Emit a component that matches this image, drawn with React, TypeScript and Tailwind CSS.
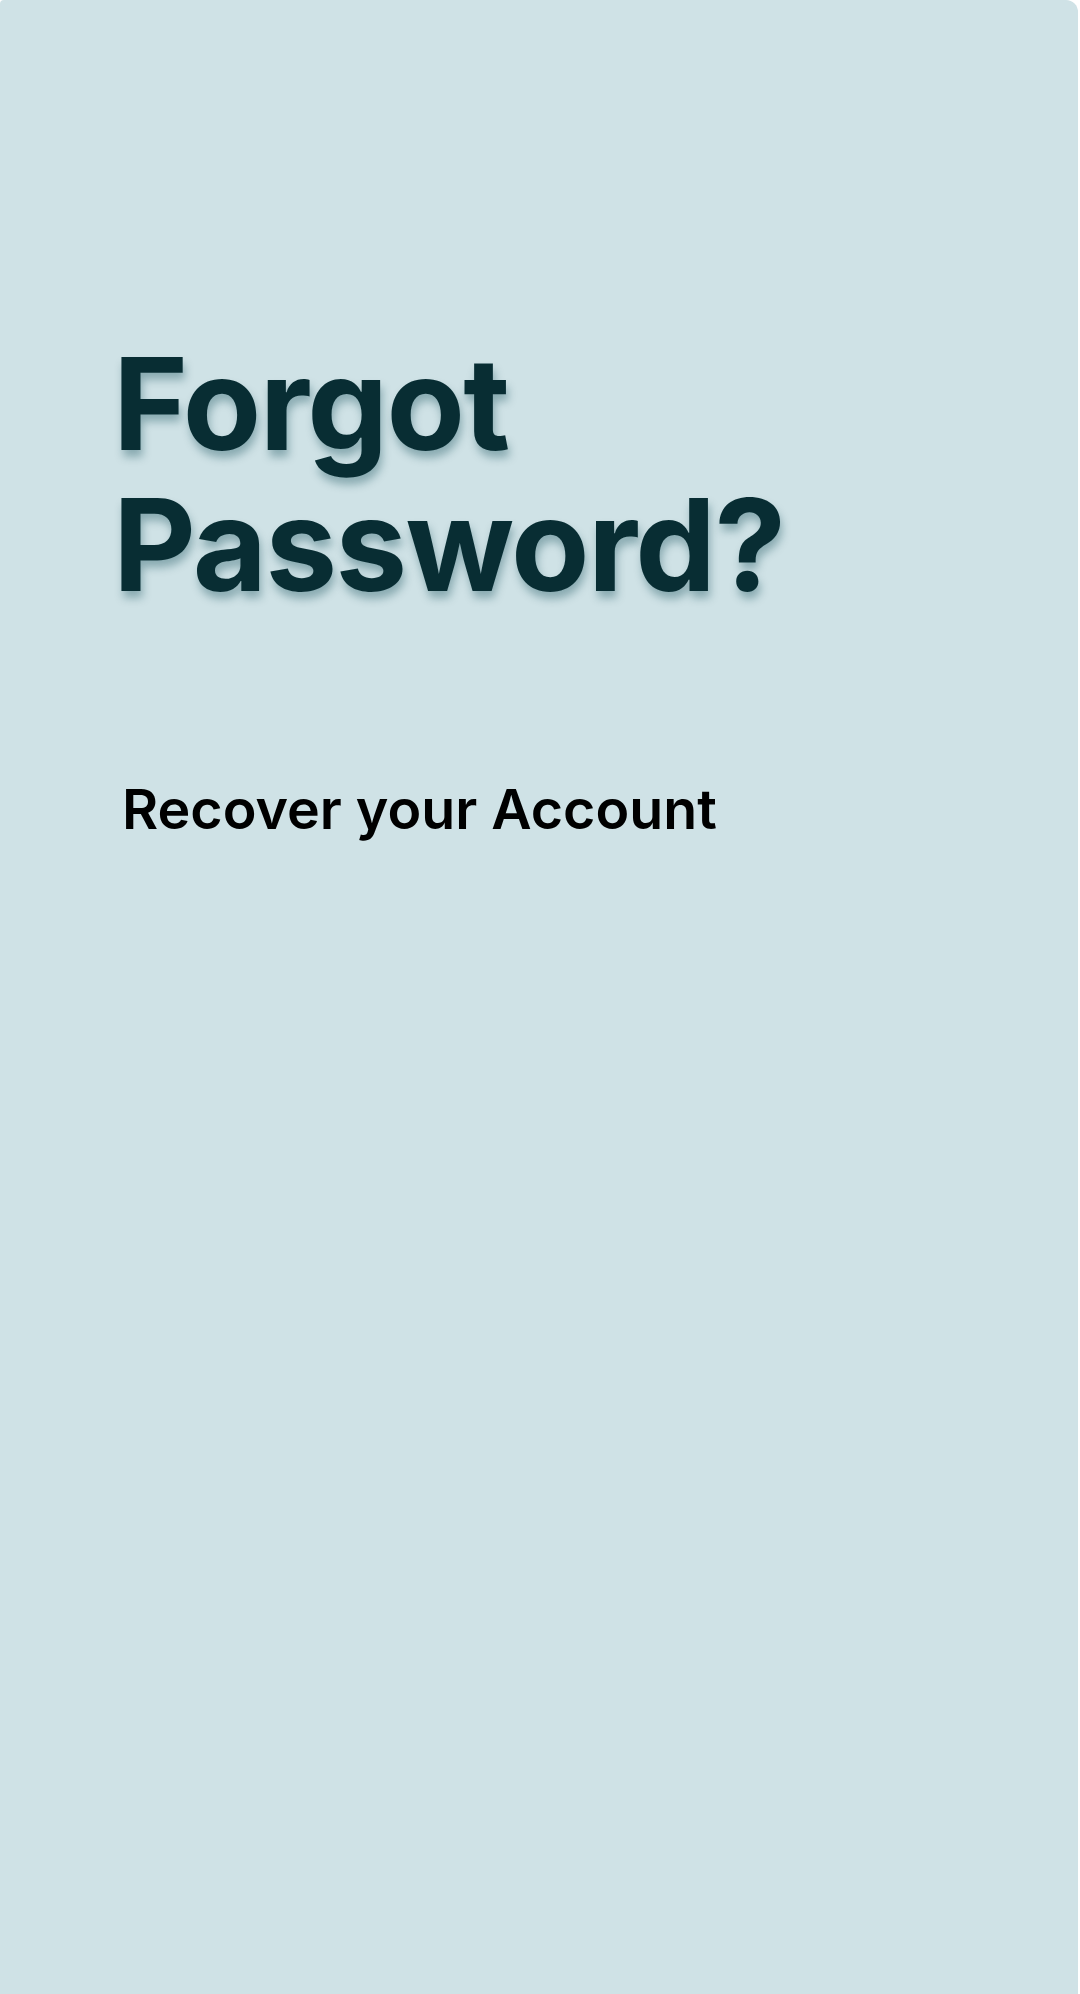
export default function App() {
  return (
    <div className="min-h-[1994px] w-full bg-white">
      <div className="min-h-[1994px] w-[1078px] rounded-tr-xl rounded-tl-sm bg-[#cfe2e6] pt-[334px] pl-[113px] font-['Inter','Noto_Sans',sans-serif]">
        <h1 className="text-[128px] font-bold leading-[140.8px] tracking-[-1.6px] text-[#082d33] [text-shadow:2px_7px_8px_rgba(10,70,80,0.35)]">
          Forgot
          <br />
          Password?
        </h1>
        <p className="mt-[159px] pl-[9px] text-[55.5px] font-semibold leading-[67px] text-black">
          Recover your Account
        </p>
      </div>
    </div>
  );
}
